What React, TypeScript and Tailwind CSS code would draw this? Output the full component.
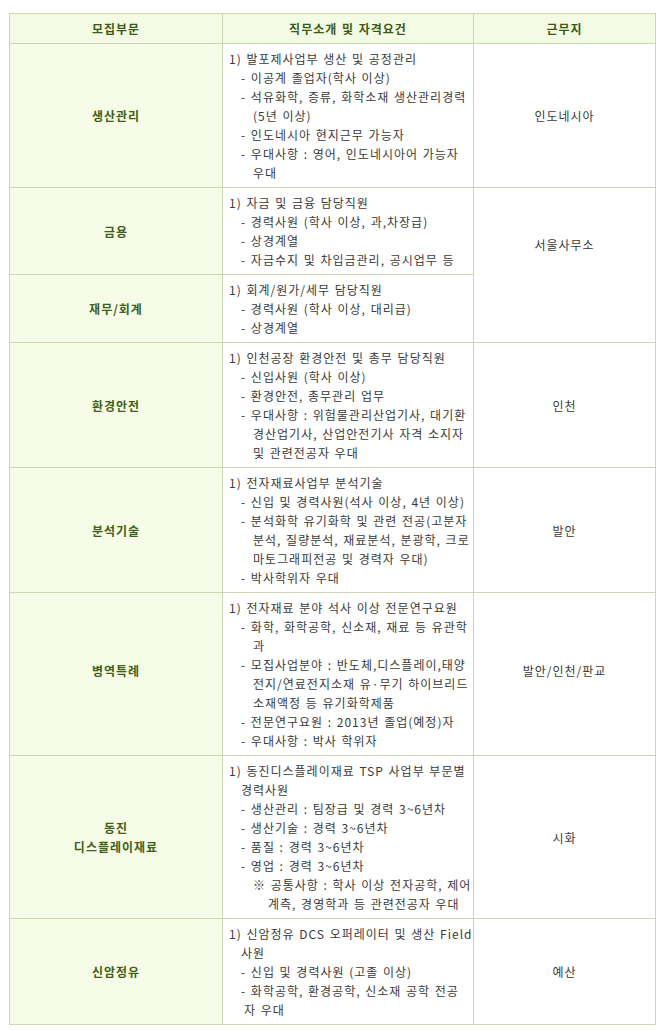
import React from 'react';

type Line = { i: number; t: string };
type Row = {
  label: string[];
  lines: Line[];
  place?: string;
  span?: number;
  placeClass?: string;
  labelClass?: string;
};

const L = (i: number, t: string): Line => ({ i, t });

const rows: Row[] = [
  {
    label: ['생산관리'],
    lines: [
      L(0, '1) 발포제사업부 생산 및 공정관리'),
      L(1, '- 이공계 졸업자(학사 이상)'),
      L(1, '- 석유화학, 증류, 화학소재 생산관리경력'),
      L(2, '(5년 이상)'),
      L(1, '- 인도네시아 현지근무 가능자'),
      L(1, '- 우대사항 : 영어, 인도네시아어 가능자'),
      L(2, '우대'),
    ],
    place: '인도네시아',
  },
  {
    label: ['금용'],
    lines: [
      L(0, '1) 자금 및 금융 담당직원'),
      L(1, '- 경력사원 (학사 이상, 과,차장급)'),
      L(1, '- 상경계열'),
      L(1, '- 자금수지 및 차입금관리, 공시업무 등'),
    ],
    place: '서울사무소',
    span: 2,
    placeClass: 'pb-[42px]',
  },
  {
    label: ['재무/회계'],
    lines: [
      L(0, '1) 회계/원가/세무 담당직원'),
      L(1, '- 경력사원 (학사 이상, 대리급)'),
      L(1, '- 상경계열'),
    ],
  },
  {
    label: ['환경안전'],
    lines: [
      L(0, '1) 인천공장 환경안전 및 총무 담당직원'),
      L(1, '- 신입사원 (학사 이상)'),
      L(1, '- 환경안전, 총무관리 업무'),
      L(1, '- 우대사항 : 위험물관리산업기사, 대기환'),
      L(2, '경산업기사, 산업안전기사 자격 소지자'),
      L(2, '및 관련전공자 우대'),
    ],
    place: '인천',
  },
  {
    label: ['분석기술'],
    lines: [
      L(0, '1) 전자재료사업부 분석기술'),
      L(1, '- 신입 및 경력사원(석사 이상, 4년 이상)'),
      L(1, '- 분석화학 유기화학 및 관련 전공(고분자'),
      L(2, '분석, 질량분석, 재료분석, 분광학, 크로'),
      L(2, '마토그래피전공 및 경력자 우대)'),
      L(1, '- 박사학위자 우대'),
    ],
    place: '발안',
  },
  {
    label: ['병역특례'],
    lines: [
      L(0, '1) 전자재료 분야 석사 이상 전문연구요원'),
      L(1, '- 화학, 화학공학, 신소재, 재료 등 유관학'),
      L(2, '과'),
      L(1, '- 모집사업분야 : 반도체,디스플레이,태양'),
      L(2, '전지/연료전지소재 유·무기 하이브리드'),
      L(2, '소재액정 등 유기화학제품'),
      L(1, '- 전문연구요원 : 2013년 졸업(예정)자'),
      L(1, '- 우대사항 : 박사 학위자'),
    ],
    place: '발안/인천/판교',
    placeClass: 'pb-[8px]',
    labelClass: 'pb-[8px]',
  },
  {
    label: ['동진', '디스플레이재료'],
    lines: [
      L(0, '1) 동진디스플레이재료 TSP 사업부 부문별'),
      L(1, '경력사원'),
      L(1, '- 생산관리 : 팀장급 및 경력 3~6년차'),
      L(1, '- 생산기술 : 경력 3~6년차'),
      L(1, '- 품질 : 경력 3~6년차'),
      L(1, '- 영업 : 경력 3~6년차'),
      L(2, '※ 공통사항 : 학사 이상 전자공학, 제어'),
      L(3, '계측, 경영학과 등 관련전공자 우대'),
    ],
    place: '시화',
  },
  {
    label: ['신암정유'],
    lines: [
      L(0, '1) 신암정유 DCS 오퍼레이터 및 생산 Field'),
      L(1, '사원'),
      L(1, '- 신입 및 경력사원 (고졸 이상)'),
      L(1, '- 화학공학, 환경공학, 신소재 공학 전공'),
      L(4, '자 우대'),
    ],
    place: '예산',
  },
];

const indent = ['pl-0', 'pl-[12px]', 'pl-[24px]', 'pl-[39px]', 'pl-[15px]'];

const cell = 'border border-[#cdd6b2] align-middle';

export default function App() {
  return (
    <div className="bg-white min-h-[1030px] pl-[9px] pt-[13px] font-['Noto_Sans_CJK_KR',sans-serif] text-[12px] tracking-[1px] [word-spacing:1px] text-[#3a3a3a]">
      <table className="border-collapse table-fixed w-[646px]">
        <colgroup>
          <col className="w-[213px]" />
          <col className="w-[251px]" />
          <col className="w-[182px]" />
        </colgroup>
        <thead>
          <tr className="h-[30px] bg-[#f4fbe4]">
            {['모집부문', '직무소개 및 자격요건', '근무지'].map((h) => (
              <th key={h} className={`${cell} text-center font-bold text-[#3b5a14] leading-[19px]`}>
                {h}
              </th>
            ))}
          </tr>
        </thead>
        <tbody>
          {rows.map((r, idx) => (
            <tr key={idx}>
              <td className={`${cell} bg-[#f6fce8] text-center font-bold text-[#3f6016] leading-[19px]`}>
                <div className={r.labelClass}>
                  {r.label.map((s) => (
                    <div key={s}>{s}</div>
                  ))}
                </div>
              </td>
              <td className={`${cell} pl-[6px] pr-1 pt-[5px] pb-[5px]`}>
                {r.lines.map((ln, k) => (
                  <div key={k} className={`${indent[ln.i]} h-[19px] leading-[19px] whitespace-nowrap`}>
                    {ln.t}
                  </div>
                ))}
              </td>
              {r.place && (
                <td rowSpan={r.span ?? 1} className={`${cell} text-center leading-[19px]`}>
                  <div className={r.placeClass}>{r.place}</div>
                </td>
              )}
            </tr>
          ))}
        </tbody>
      </table>
    </div>
  );
}
